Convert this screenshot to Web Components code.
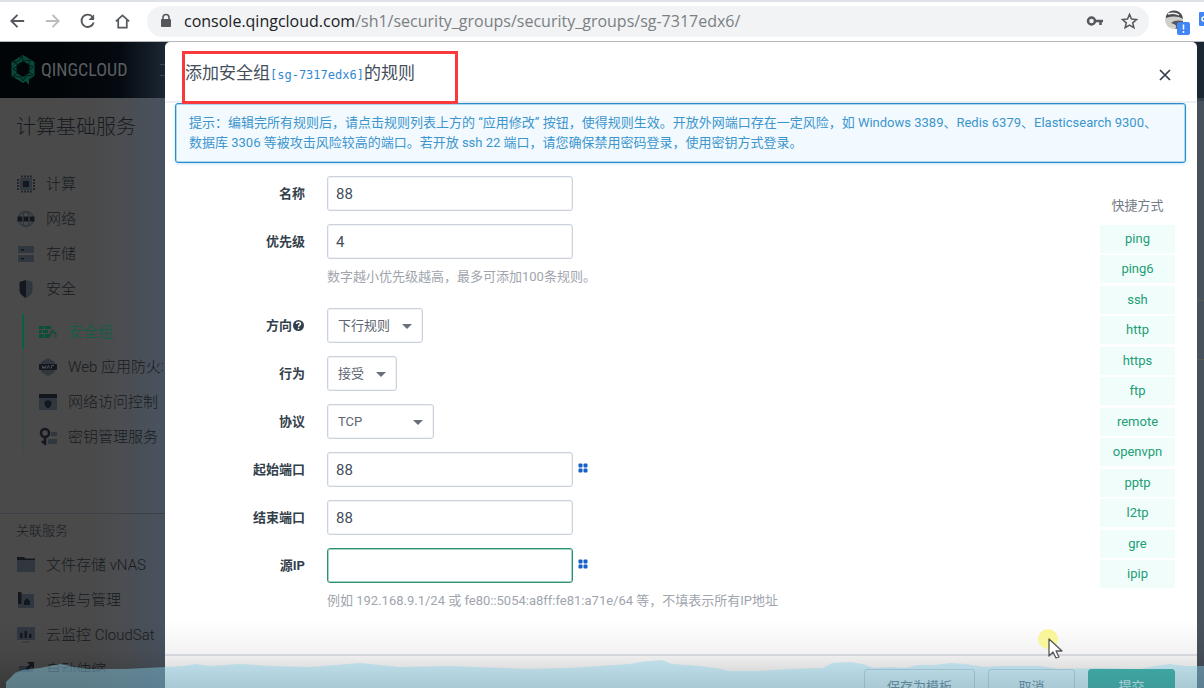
<!DOCTYPE html>
<html lang="zh-CN">
<head>
<meta charset="utf-8">
<title>QingCloud 控制台 - 安全组</title>
<style>
  html, body { margin: 0; height: 100%; }
  body { font-family: Roboto, "Noto Sans CJK SC", sans-serif; font-size: 13px; line-height: 20px; overflow: hidden; }
</style>
</head>
<body>
<qc-app></qc-app>
<script>
const define = (name, html, setup) => {
  const tpl = document.createElement('template');
  tpl.innerHTML = html;
  customElements.define(name, class extends HTMLElement {
    connectedCallback() {
      if (this.shadowRoot) return;
      this.attachShadow({ mode: 'open' }).append(tpl.content.cloneNode(true));
      if (setup) setup(this, this.shadowRoot);
    }
  });
};

/* ---------- icons (20x20 grid) ---------- */
const D = '#14181e', L = '#30373f';
const ICONS = {
  cpu: `<rect x="4" y="4" width="12" height="12" rx="1" fill="${L}"/><rect x="7" y="7" width="6" height="6" fill="${D}"/><path d="M6 1.5v2M9 1.5v2M12 1.5v2M15 1.5v2M6 16.5v2M9 16.5v2M12 16.5v2M15 16.5v2M1 6h2M1 9h2M1 12h2M1 15h2M17 6h2M17 9h2M17 12h2M17 15h2" stroke="${D}" stroke-width="1.4"/>`,
  net: `<g fill="none" stroke="${L}" stroke-width="1.4"><circle cx="10" cy="10" r="7.5"/><ellipse cx="10" cy="10" rx="3.5" ry="7.5"/></g><path d="M1.500 7.500h4.500v5H1.500zM7.500 7.500h5v5h-5zM14 7.500h4.500v5H14z" fill="${D}"/>`,
  disk: `<path d="M2 2h16v7H2zM2 11h16v7H2z" fill="${L}"/><path d="M5 5h3v1.500H5zM5 14h3v1.500H5z" fill="${D}"/>`,
  shield: `<path d="M10 1L3.500 3v8c0 4 3.500 6.500 6.500 8z" fill="${D}"/><path d="M10 1l6.500 2v8c0 4-3.500 6.500-6.500 8z" fill="${L}"/>`,
  wall: `<path d="M1 4h5v3H1zM7 4h6v3H7zM1 8h3v3H1zM5 8h5v3H5zM1 12h5v4H1zM7 12h4v4H7z" fill="#084e38"/><path d="M10.500 14.500c1-2.500 1-5 3.500-7.500 3 1.500 5 4.500 5 8l-2 1c0-3-1-4.500-2-5-1 1-1.500 3-2.500 4.500z" fill="#23493f"/>`,
  waf: `<path d="M10 1l7 4v10l-7 4-7-4V5z" fill="${L}"/><rect x="1" y="7" width="18" height="6" rx="1" fill="${D}"/><path d="M4 8.500l1 3 1-2 1 2 1-3M9 11.500l1.500-3 1 3M13.500 11.500v-3h2.500" stroke="#4a4e55" fill="none"/>`,
  acl: `<rect x="1" y="3" width="18" height="15" fill="${L}"/><rect x="1" y="2" width="18" height="4" fill="${D}"/><path d="M10 8l3.500 1.500c0 4-1 5.500-3.500 7-2.500-1.500-3.500-3-3.500-7z" fill="${D}"/>`,
  key: `<circle cx="7" cy="6" r="4" fill="none" stroke="${D}" stroke-width="2.500"/><path d="M7 10v8M7 15H3.500" stroke="${D}" stroke-width="2.500"/><path d="M13 5h6v4h-6zM10 12h9v5h-9z" fill="${L}"/>`,
  folder: `<path d="M1 4h18v13H1z" fill="${L}"/><path d="M1 2h7l1.500 1.500H19V5H1z" fill="${D}"/>`,
  ops: `<rect x="2" y="4" width="16" height="14" fill="${L}"/><path d="M2 2h3.500v12H2zM8 15v-4l3-3 3 3v4z" fill="${D}"/>`,
  chart: `<rect x="1" y="2" width="18" height="13" fill="${L}"/><path d="M4 8h2.500v5H4zM8.500 6H11v7H8.500zM13 9h2.500v4H13z" fill="${D}"/><path d="M6 17h8" stroke="${L}"/>`,
  scale: `<path d="M3 6h14v12H3z" fill="${L}"/><path d="M11 2h7v7l-2.500-2.500-4 4-2-2 4-4z" fill="${D}"/>`
};

/* ---------- browser toolbar ---------- */
define('browser-bar', `
<style>
  :host { display: flex; align-items: center; gap: 16px; height: 36px; padding: 1px 0 2px 8px; border-top: 2px solid #dee1e6; border-bottom: 1px solid #b5b8bb; background: #fff; overflow: hidden; }
  button { border: 0; background: none; padding: 0; display: flex; width: 19px; height: 20px; flex: none; }
  svg { fill: none; stroke: #55585c; stroke-width: 2; }
  .omni { flex: 1; display: flex; align-items: center; gap: 9px; height: 31px; padding: 0 10px; border-radius: 16px; background: #f1f3f4; min-width: 0; margin-left: -1px; }
  .omni button + button { margin-left: 6px; }
  .url { flex: 1; font: 16px/24px "Open Sans", "Noto Sans", sans-serif; color: #7b7f84; white-space: nowrap; }
  .url b { font-weight: 400; color: #202124; }
  .ext { display: flex; align-items: center; gap: 8px; flex: none; }
</style>
<button aria-label="后退"><svg width="20" height="20" viewBox="0 0 20 20"><path d="M17 10H4M10 3.500L3.500 10l6.500 6.500"/></svg></button>
<button aria-label="前进"><svg width="20" height="20" viewBox="0 0 20 20" style="stroke:#babcbe"><path d="M3 10h13M10 3.500l6.500 6.500-6.500 6.500"/></svg></button>
<button aria-label="刷新"><svg width="20" height="20" viewBox="0 0 20 20"><path d="M15.500 6A6.500 6.500 0 1 0 16.500 11.500"/><path d="M17 3v6h-6z" fill="#55585c" stroke="none"/></svg></button>
<button aria-label="主页"><svg width="20" height="20" viewBox="0 0 20 20"><path d="M3 10.500L10 4l7 6.500M5.500 9v8h9V9" stroke-width="1.800"/></svg></button>
<div class="omni">
  <svg width="18" height="18" viewBox="0 0 18 18"><rect x="4" y="7" width="10" height="8" rx="1" fill="#55585c" stroke="none"/><path d="M6 8V5.500a3 3 0 0 1 6 0V8" stroke-width="1.600"/></svg>
  <div class="url" role="textbox" aria-label="地址栏"><b>console.qingcloud.com</b>/sh1/security_groups/security_groups/sg-7317edx6/</div>
  <button aria-label="密码"><svg width="18" height="20" viewBox="0 0 18 20"><circle cx="5.500" cy="10" r="3.500" stroke-width="2.500"/><path d="M9 10h8M14.500 10v4" stroke-width="2.500"/></svg></button>
  <button aria-label="收藏"><svg width="20" height="20" viewBox="0 0 20 20"><path d="M10 3l2.100 4.900 5.300.5-4 3.500 1.200 5.200-4.600-2.800-4.600 2.800 1.200-5.200-4-3.500 5.300-.5z" stroke-width="1.600"/></svg></button>
</div>
<div class="ext">
  <svg width="26" height="30" viewBox="0 0 26 30" stroke="none"><circle cx="9" cy="14" r="9" fill="#cfcfcc" stroke="none"/><path d="M1 10c3-7 12-7 16-1l1 4c-5-3-10-3-17-1z" fill="#4a4c50" stroke="none"/><path d="M6 17c3-3 8-3 12-2 0 5-4 8-8 8 3-3 0-5-4-6z" fill="#56575a" stroke="none"/><path d="M3 8c4-1 8-1 11 1" stroke="#f3f3f3" stroke-width="1.500"/><rect x="12" y="16" width="13" height="13" rx="2" fill="#4285f4" stroke="none"/><path d="M18.500 18.500v5M18.500 25v2" stroke="#fff" stroke-width="1.500"/></svg>
  <svg width="5" height="30" viewBox="0 0 5 30"><rect y="6" width="10" height="14" rx="1" fill="#4285f4" stroke="none"/><circle cx="5" cy="13" r="2" stroke="#fff" stroke-width="1.500"/></svg>
</div>
`);

/* ---------- console page behind the dialog ---------- */
define('nav-item', `
<style>
  :host { display: block; height: 35px; color: #171b21; font-size: 15px; overflow: hidden; }
  :host([active]) { color: #086146; }
  a { display: flex; align-items: center; gap: 10px; height: 35px; color: inherit; text-decoration: none; white-space: nowrap; font-weight: 300; }
  svg { width: 20px; height: 20px; flex: none; }
</style>
<a href="#"><svg viewBox="0 0 20 20"></svg><span><slot></slot></span></a>
`, (el, root) => { root.querySelector('svg').innerHTML = ICONS[el.getAttribute('icon')]; });

define('console-header', `
<style>
  :host { display: flex; align-items: center; gap: 5px; height: 56px; padding: 0 10px; background: linear-gradient(90deg, #020508 60px, #050a10 120px, #1b2733 165px); overflow: hidden; }
  span { font: 500 18px/24px "Roboto Condensed", Roboto, sans-serif; font-weight: 400; color: #5a5e62; white-space: nowrap; }
  .menu { width: 12px; height: 10px; margin-left: 27px; border: solid #3c454e; border-width: 1px 0; }
</style>
<svg width="26" height="32" viewBox="0 0 26 32"><g fill="none" stroke="#07483a" stroke-width="5"><path d="M13 4l9 5.500v11L13 26l-9-5.500v-11z"/></g><path d="M13 24l6 0v7z" fill="#07483a"/><path d="M3 8l6 3-6 4 5 3-5 4 8 1 2 4 3-5 7-1-5-4 5-4-5-3 3-4-8 1-1-5-3 5z" fill="none" stroke="#031b16" stroke-width="1"/></svg>
<span>QINGCLOUD</span>
<i class="menu"></i>
`);

define('side-nav', `
<style>
  :host { display: block; box-sizing: border-box; width: 165px; flex: none; padding: 17px 0 0 16px; background: linear-gradient(90deg, #4a4a4a 90px, #4b4d50 120px, #48525f); overflow: hidden; }
  h2 { margin: 0 0 27px; font-size: 20px; line-height: 24px; font-weight: 300; color: #171b21; white-space: nowrap; }
  .sub { margin: 8px 0 59px 6px; border-left: 2px solid #424b4b; }
  .sub nav-item { padding-left: 14px; }
  .sub nav-item[active] { box-shadow: -2px 0 0 #086146; }
  .related { margin-left: -16px; padding: 7px 0 0 16px; border-top: 1px solid #3d4147; }
  h3 { margin: 0 0 6px; font-size: 13px; line-height: 20px; font-weight: 300; color: #171b21; }
  .cut { height: 20px; }
  nav { overflow: hidden; width: 147px; }
</style>
<h2>计算基础服务</h2>
<nav>
  <nav-item icon="cpu">计算</nav-item>
  <nav-item icon="net">网络</nav-item>
  <nav-item icon="disk">存储</nav-item>
  <nav-item icon="shield">安全</nav-item>
  <div class="sub">
    <nav-item icon="wall" active>安全组</nav-item>
    <nav-item icon="waf">Web 应用防火墙</nav-item>
    <nav-item icon="acl">网络访问控制</nav-item>
    <nav-item icon="key">密钥管理服务</nav-item>
  </div>
</nav>
<div class="related">
  <h3>关联服务</h3>
  <nav-item icon="folder">文件存储 vNAS</nav-item>
  <nav-item icon="ops">运维与管理</nav-item>
  <nav-item icon="chart">云监控 CloudSat</nav-item>
  <nav-item icon="scale" class="cut">自动伸缩</nav-item>
</div>
`);

define('console-page', `
<style>
  :host { display: flex; flex-direction: column; height: 100%; background: #48525d; }
  .row { flex: 1; display: flex; min-height: 0; }
  .rest { flex: 1; background: #48525d; border-top: 3px solid #36424e; box-sizing: border-box; padding-top: 199px; }
  .banner { height: 58px; border: solid #5a5d4c; border-width: 1px 0; }
</style>
<console-header></console-header>
<div class="row"><side-nav></side-nav><div class="rest"><div class="banner"></div></div></div>
`);

/* ---------- form ---------- */
define('form-row', `
<style>
  :host { display: grid; grid-template-columns: 130px 1fr; column-gap: 22px; }
  :host([hint]) { padding-bottom: 8px; }
  label { display: flex; align-items: center; justify-content: flex-end; height: 35px; font-weight: 700; color: #343f4c; white-space: nowrap; }
  .line { display: flex; align-items: center; gap: 5px; height: 35px; }
  input, select { box-sizing: border-box; height: 35px; border: 1px solid #cbd2de; border-radius: 3px; background: #fff; color: #454f5c; font: 15px/20px Roboto, "Noto Sans CJK SC", sans-serif; outline: 0; margin: 0; box-shadow: inset 0 0 0 1px #f0f2f6; }
  input { width: 246px; padding: 0 8px; }
  :host([focused]) input { border-color: #2e9073; box-shadow: inset 0 0 0 1px #a5d3c5; }
  .pick { position: relative; display: flex; }
  .pick::after { content: ""; position: absolute; right: 11px; top: 16px; border: 5px solid transparent; border-top-color: #697077; border-bottom: 0; pointer-events: none; }
  select { appearance: none; font-size: 13px; padding: 0 31px 0 10px; color: #5c6570; }
  select.wide { min-width: 107px; }
  .hint { margin: 8px 0 0; color: #a0a5ad; grid-column: 2; }
  .dots { border: 0; background: none; padding: 0; height: 14px; display: flex; }
  [hidden] { display: none; }
</style>
<label for="field"></label>
<div class="line"></div>
<p class="hint" hidden><slot></slot></p>
`, (el, root) => {
  const a = n => el.getAttribute(n);
  const label = root.querySelector('label'), line = root.querySelector('.line');
  label.textContent = a('label');
  if (el.hasAttribute('help')) label.insertAdjacentHTML('beforeend', '<svg width="13" height="13" viewBox="0 0 13 13"><circle cx="6.500" cy="6.500" r="5.500" fill="#343f4c"/><path d="M4.500 5c0-2.500 4-2.500 4 0 0 1.300-2 1.200-2 2.800M6.500 8.800v1.500" stroke="#fff" stroke-width="1.500" fill="none"/></svg>');
  if (el.hasAttribute('select')) {
    line.innerHTML = '<span class="pick"><select id="field"><option></option></select></span>';
    line.querySelector('option').textContent = a('value');
    if (el.hasAttribute('wide')) line.querySelector('select').className = 'wide';
  } else {
    line.innerHTML = '<input id="field" type="text">';
    line.querySelector('input').value = a('value') || '';
  }
  if (el.hasAttribute('dots')) line.insertAdjacentHTML('beforeend', '<button class="dots" type="button" aria-label="选择"><svg width="10" height="10" viewBox="0 0 10 10" fill="#1660c8"><rect x="0.500" y="0.500" width="4" height="4" rx="1"/><rect x="5.500" y="0.500" width="4" height="4" rx="1"/><rect x="0.500" y="5.500" width="4" height="4" rx="1"/><rect x="5.500" y="5.500" width="4" height="4" rx="1"/></svg></button>');
  if (el.hasAttribute('hint')) root.querySelector('.hint').hidden = false;
});

define('quick-links', `
<style>
  :host { display: block; width: 75px; text-align: center; }
  h3 { margin: 0 0 9px; font-size: 13px; line-height: 20px; font-weight: 400; color: #737a84; }
  .list { display: flex; flex-direction: column; justify-content: space-between; height: 363px; }
  button { border: 0; padding: 0; height: 28px; background: #f1fdfa; color: #229e77; font: 13px/28px Roboto, sans-serif; }
</style>
<h3>快捷方式</h3><div class="list"></div>
`, (el, root) => {
  for (const name of ['ping', 'ping6', 'ssh', 'http', 'https', 'ftp', 'remote', 'openvpn', 'pptp', 'l2tp', 'gre', 'ipip']) {
    const b = document.createElement('button');
    b.type = 'button';
    b.textContent = name;
    root.querySelector('.list').append(b);
  }
});

define('tip-alert', `
<style>
  :host { display: block; padding: 9px 24px 9px 13px; border: 1px solid #2f8bc6; border-radius: 3px; background: #f2faff; color: #3c95cd; box-shadow: inset 0 0 0 1px #a9d9f3, 0 1px 3px #c5e6f7; }
</style>
<slot></slot>
`);

define('rule-dialog', `
<style>
  :host { display: flex; flex-direction: column; background: #fff; border-radius: 5px 5px 0 0; }
  header { display: flex; align-items: center; justify-content: space-between; height: 57px; padding: 2px 22px 0 20px; border-bottom: 2px solid #eceff4; }
  h1 { position: relative; margin: 0; font-size: 17px; line-height: 26px; font-weight: 400; color: #444e5b; white-space: nowrap; }
  h1 a { font: 12px "DejaVu Sans Mono", monospace; color: #3388d3; text-decoration: none; }
  .mark { position: absolute; left: -3px; top: -9px; width: 276px; height: 53px; box-sizing: border-box; border: 3px solid #f93a3c; z-index: 1; pointer-events: none; }
  .close { border: 0; background: none; padding: 0; width: 20px; height: 20px; margin-top: 4px; }
  .close svg { display: block; }
  main { flex: 1; padding: 0 11px 0 10px; min-height: 0; }
  .cols { display: flex; justify-content: space-between; padding-right: 11px; }
  form { display: grid; gap: 13px; padding-top: 13px; }
  quick-links { margin-top: 33px; }
  footer { display: flex; justify-content: flex-end; gap: 13px; padding: 13px 22px; border-top: 2px solid #e1e5ea; background: #fff; }
  footer button { box-sizing: border-box; height: 35px; min-width: 87px; padding: 0 22px; border: 1px solid #c3d0da; border-radius: 3px; background: #fff; color: #4a5968; font: 13px/20px Roboto, "Noto Sans CJK SC", sans-serif; }
  footer .ok { background: #009574; border-color: #009574; color: #fff; }
</style>
<header>
  <h1>添加安全组<a href="#">[sg-7317edx6]</a>的规则<i class="mark"></i></h1>
  <button class="close" aria-label="关闭"><svg width="20" height="20" viewBox="0 0 20 20"><path d="M5 5l10 10M15 5L5 15" stroke="#323e4c" stroke-width="1.700"/></svg></button>
</header>
<main>
  <tip-alert>提示：编辑完所有规则后，请点击规则列表上方的 “应用修改” 按钮，使得规则生效。开放外网端口存在一定风险，如 Windows 3389、Redis 6379、Elasticsearch 9300、数据库 3306 等被攻击风险较高的端口。若开放 ssh 22 端口，请您确保禁用密码登录，使用密钥方式登录。</tip-alert>
  <div class="cols">
    <form>
      <form-row label="名称" value="88"></form-row>
      <form-row label="优先级" value="4" hint>数字越小优先级越高，最多可添加100条规则。</form-row>
      <form-row label="方向" value="下行规则" select help></form-row>
      <form-row label="行为" value="接受" select></form-row>
      <form-row label="协议" value="TCP" select wide></form-row>
      <form-row label="起始端口" value="88" dots></form-row>
      <form-row label="结束端口" value="88"></form-row>
      <form-row label="源IP" focused dots hint>例如 192.168.9.1/24 或 fe80::5054:a8ff:fe81:a71e/64 等，不填表示所有IP地址</form-row>
    </form>
    <quick-links></quick-links>
  </div>
</main>
<footer>
  <button type="button">保存为模板</button>
  <button type="button">取消</button>
  <button type="button" class="ok">提交</button>
</footer>
`);

/* ---------- water strip and shade along the bottom ---------- */
define('water-strip', `
<style>
  :host { display: block; height: 68px; pointer-events: none; background: linear-gradient(rgba(0,0,0,0), rgba(0,0,0,.05) 48%, rgba(0,0,0,.12) 70%, rgba(0,0,0,.24)); }
  svg { display: block; width: 100%; height: 68px; }
</style>
<svg viewBox="0 0 1204 68" preserveAspectRatio="none"><path fill="#89d0ea" fill-opacity=".45" d="M6 68V62L15 53L22 50L40 48L60 44L75 47L90 49H125L165 47L185 46L195 44L210 46L240 44L270 46L310 47L360 43L400 47L450 46L500 48L527 49L570 48L600 46L630 44L640 42L662 40L672 44L700 46L722 49L728 51H760L790 49L823 48L832 43L850 42L862 44L874 48L890 47L905 48L918 45H935L950 43L965 44L985 47L1000 46L1040 46L1060 49L1100 48L1140 49L1155 46L1170 44L1185 46H1204V68Z"/></svg>
`);

define('qc-app', `
<style>
  :host { display: flex; flex-direction: column; height: 100vh; overflow: hidden; }
  .stage { position: relative; flex: 1; min-height: 0; overflow: hidden; }
  rule-dialog { position: absolute; inset: 0 7px -29px 165px; }
  water-strip { position: absolute; inset: auto 0 0 0; }
  .pointer { position: absolute; right: 136px; bottom: 27px; pointer-events: none; }
</style>
<browser-bar></browser-bar>
<div class="stage">
  <console-page></console-page>
  <rule-dialog role="dialog" aria-modal="true"></rule-dialog>
  <water-strip></water-strip>
  <svg class="pointer" width="30" height="34" viewBox="0 0 30 34"><circle cx="10" cy="12" r="10" fill="#f8f59a"/><path d="M11 12v17l4-4 3 6 3-1-3-6h6z" fill="#fff" stroke="#555" stroke-width="1.300" stroke-linejoin="round"/></svg>
</div>
`);
</script>
</body>
</html>
